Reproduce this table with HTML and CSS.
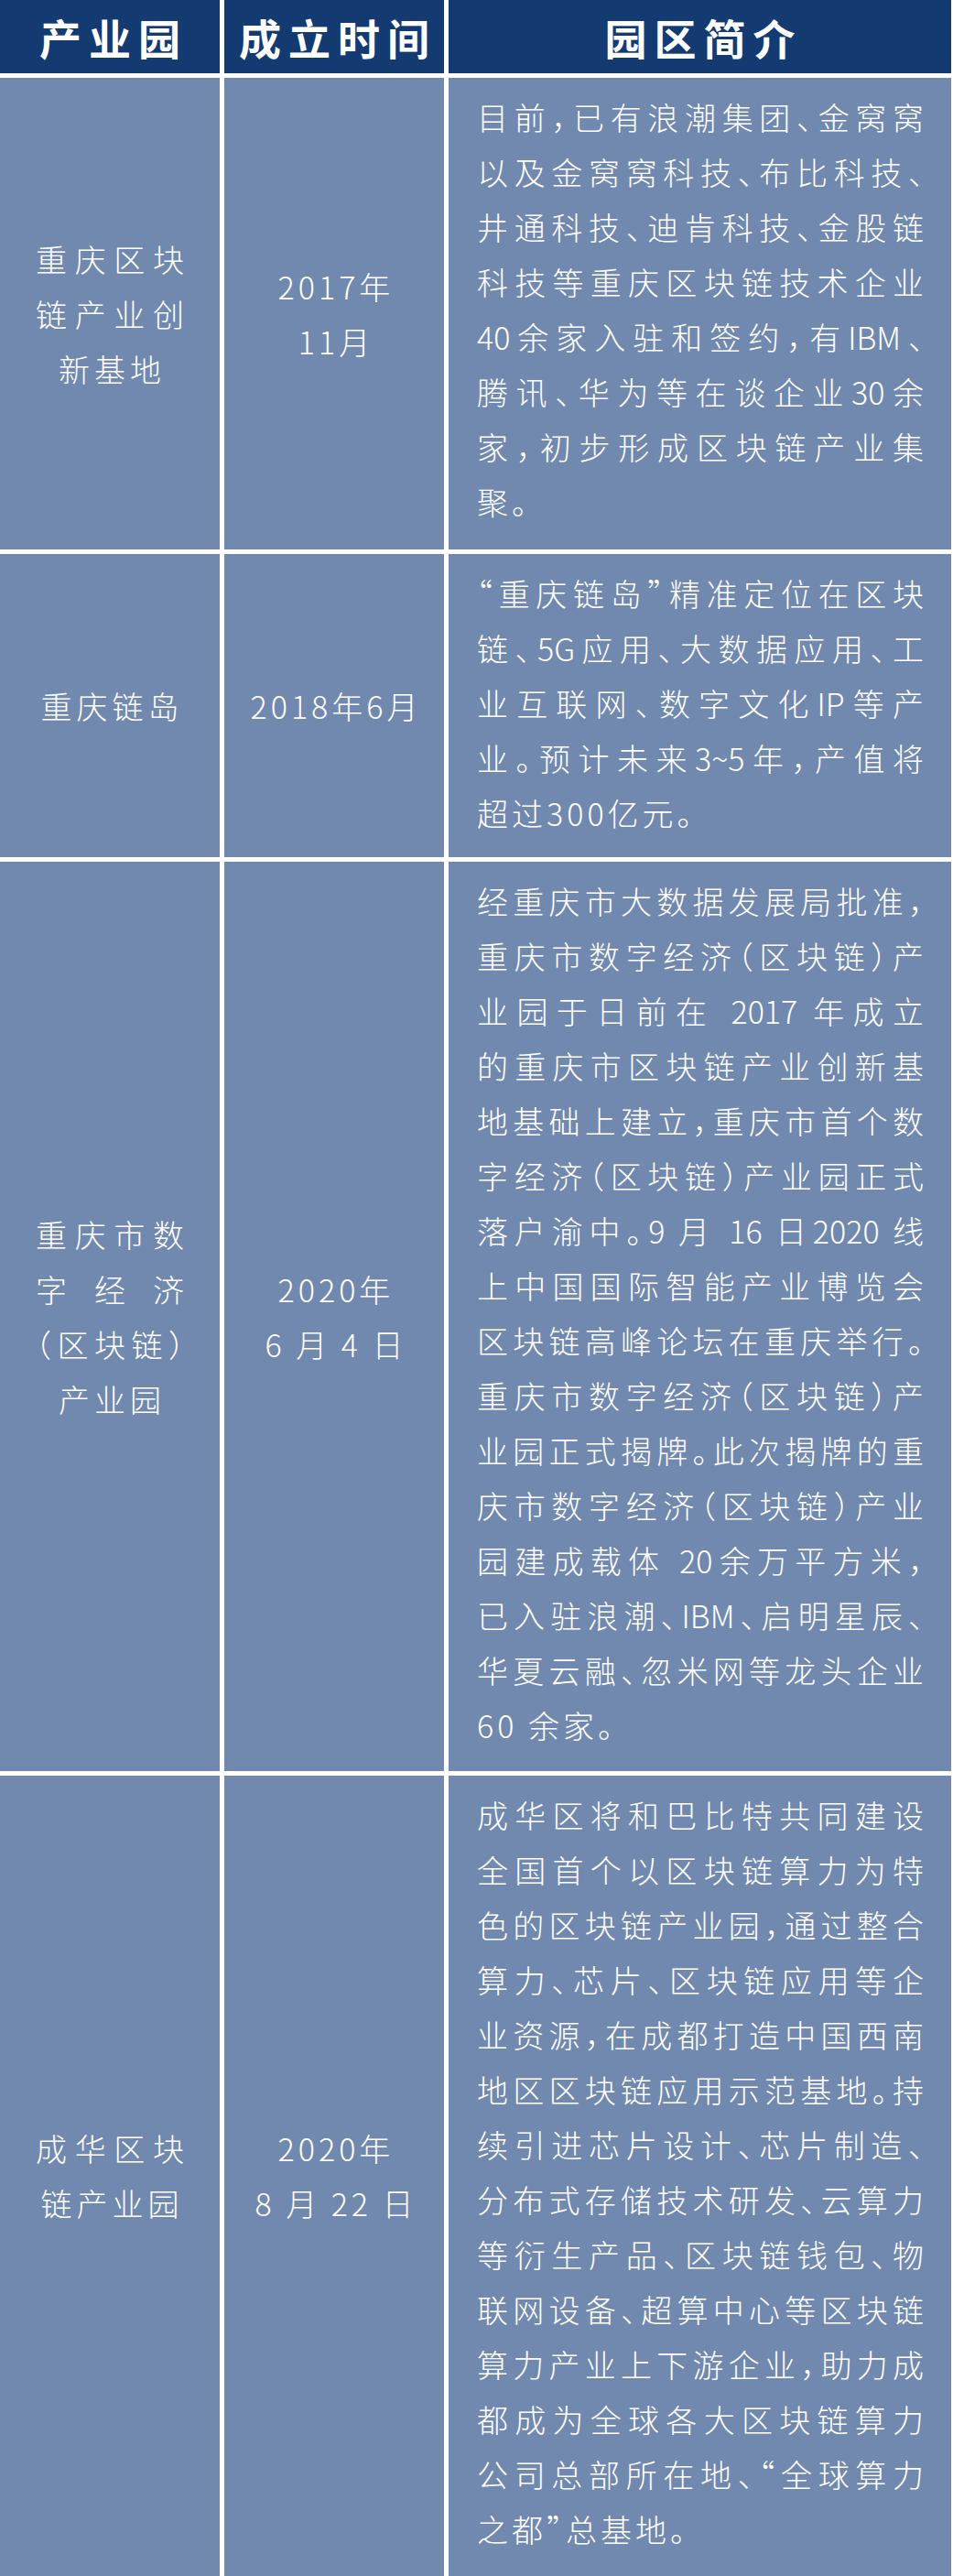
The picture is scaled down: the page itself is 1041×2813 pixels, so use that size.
FILE: index.html
```html
<!DOCTYPE html>
<html lang="zh-CN">
<head>
<meta charset="utf-8">
<title>产业园</title>
<link rel="stylesheet" href="styles.css">
</head>
<body>
<div class="table">
  <div class="th">产业园</div>
  <div class="th">成立时间</div>
  <div class="th">园区简介</div>

  <div class="td name">
    <div class="j">重庆区块</div>
    <div class="j">链产业创</div>
    <div class="c">新基地</div>
  </div>
  <div class="td date">
    <div class="d">2017年</div>
    <div class="d">11月</div>
  </div>
  <div class="td intro p1">
    <div class="j">目前，已有浪潮集团、金窝窝</div>
    <div class="j">以及金窝窝科技、布比科技、</div>
    <div class="j">井通科技、迪肯科技、金股链</div>
    <div class="j">科技等重庆区块链技术企业</div>
    <div class="j">40余家入驻和签约，有IBM、</div>
    <div class="j">腾讯、华为等在谈企业30余</div>
    <div class="j">家，初步形成区块链产业集</div>
    <div class="e">聚。</div>
  </div>

  <div class="td name">
    <div class="c">重庆链岛</div>
  </div>
  <div class="td date">
    <div class="d">2018年6月</div>
  </div>
  <div class="td intro p2">
    <div class="j">“重庆链岛”精准定位在区块</div>
    <div class="j">链、5G应用、大数据应用、工</div>
    <div class="j">业互联网、数字文化IP等产</div>
    <div class="j">业。预计未来3~5年，产值将</div>
    <div class="e">超过300亿元。</div>
  </div>

  <div class="td name">
    <div class="j">重庆市数</div>
    <div class="j">字经济</div>
    <div class="j">（区块链）</div>
    <div class="c">产业园</div>
  </div>
  <div class="td date">
    <div class="d">2020年</div>
    <div class="d">6 月 4 日</div>
  </div>
  <div class="td intro p3">
    <div class="j">经重庆市大数据发展局批准，</div>
    <div class="j">重庆市数字经济（区块链）产</div>
    <div class="j">业园于日前在 2017 年成立</div>
    <div class="j">的重庆市区块链产业创新基</div>
    <div class="j">地基础上建立，重庆市首个数</div>
    <div class="j">字经济（区块链）产业园正式</div>
    <div class="j">落户渝中。9 月 16 日2020 线</div>
    <div class="j">上中国国际智能产业博览会</div>
    <div class="j">区块链高峰论坛在重庆举行。</div>
    <div class="j">重庆市数字经济（区块链）产</div>
    <div class="j">业园正式揭牌。此次揭牌的重</div>
    <div class="j">庆市数字经济（区块链）产业</div>
    <div class="j">园建成载体 20余万平方米，</div>
    <div class="j">已入驻浪潮、IBM、启明星辰、</div>
    <div class="j">华夏云融、忽米网等龙头企业</div>
    <div class="e">60 余家。</div>
  </div>

  <div class="td name">
    <div class="j">成华区块</div>
    <div class="c">链产业园</div>
  </div>
  <div class="td date">
    <div class="d">2020年</div>
    <div class="d">8 月 22 日</div>
  </div>
  <div class="td intro p4">
    <div class="j">成华区将和巴比特共同建设</div>
    <div class="j">全国首个以区块链算力为特</div>
    <div class="j">色的区块链产业园，通过整合</div>
    <div class="j">算力、芯片、区块链应用等企</div>
    <div class="j">业资源，在成都打造中国西南</div>
    <div class="j">地区区块链应用示范基地。持</div>
    <div class="j">续引进芯片设计、芯片制造、</div>
    <div class="j">分布式存储技术研发、云算力</div>
    <div class="j">等衍生产品、区块链钱包、物</div>
    <div class="j">联网设备、超算中心等区块链</div>
    <div class="j">算力产业上下游企业，助力成</div>
    <div class="j">都成为全球各大区块链算力</div>
    <div class="j">公司总部所在地、“全球算力</div>
    <div class="e">之都”总基地。</div>
  </div>
</div>
</body>
</html>
```

FILE: styles.css
```css
body {
  margin: 0;
  background: #ffffff;
}

.table {
  display: grid;
  grid-template-columns: 240px 240px 549px;
  gap: 5px;
  font-family: "Noto Sans CJK SC", "Noto Sans", sans-serif;
  color: #ffffff;
  font-feature-settings: "halt";
  text-spacing-trim: space-all;
}

.th {
  background: #143a72;
  height: 80px;
  display: flex;
  align-items: center;
  justify-content: center;
  font-size: 46px;
  font-weight: 700;
  line-height: 1;
  letter-spacing: 8px;
  padding-left: 8px;
}

.td {
  background: #7189ae;
  font-size: 34px;
  font-weight: 300;
  line-height: 60px;
  white-space: nowrap;
}

.name {
  padding: 0 39px;
  display: flex;
  flex-direction: column;
  justify-content: center;
}

.date {
  display: flex;
  flex-direction: column;
  justify-content: center;
}

.intro {
  padding: 13px 30px 20px 31px;
}

.p1 { padding-bottom: 22px; }
.p2 { padding-bottom: 18px; }
.p3 { padding-bottom: 20px; }
.p4 { padding-bottom: 21px; }

.j {
  text-align: justify;
  text-align-last: justify;
}

.c {
  text-align: center;
  letter-spacing: 5px;
  padding-left: 5px;
}

.d {
  text-align: center;
  letter-spacing: 4px;
  padding-left: 4px;
}

.e {
  letter-spacing: 4px;
}
```
